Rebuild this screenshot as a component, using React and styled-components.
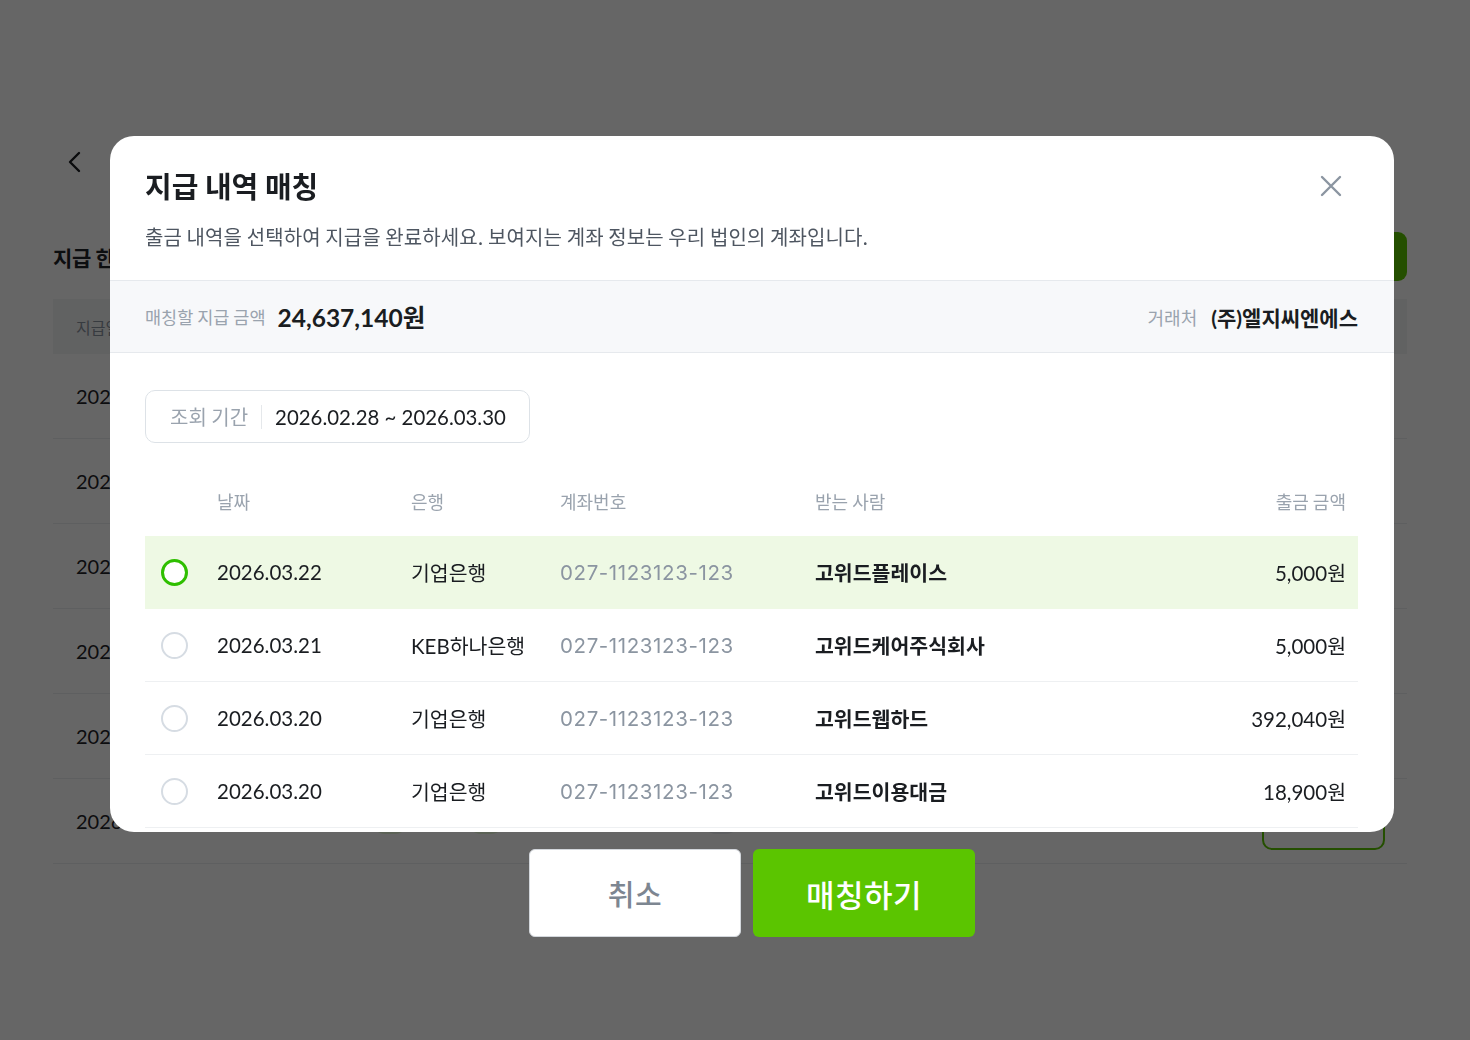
import styled, { createGlobalStyle } from "styled-components";

const GlobalStyle = createGlobalStyle`
  * { box-sizing: border-box; }
  html, body {
    margin: 0;
    padding: 0;
    background: #ffffff;
    font-family: "Lato", "Noto Sans CJK KR", sans-serif;
    color: #1f2329;
  }
`;

// 뒤에 깔린 페이지
const Page = styled.div`
  width: 1470px;
  height: 1040px;
  padding: 150px 63px 0 53px;
  overflow: hidden;
`;

const BackRow = styled.div`
  height: 24px;
  padding-left: 13px;
  display: flex;
  align-items: center;
  gap: 26px;
  font-size: 22px;
  font-weight: 700;
`;

const PageHead = styled.div`
  margin-top: 58px;
  display: flex;
  justify-content: space-between;
  align-items: center;
`;

const PageTitle = styled.h2`
  margin: 0;
  font-size: 21px;
  font-weight: 700;
  letter-spacing: -0.4px;
`;

const GreenBtn = styled.div`
  width: 120px;
  height: 49px;
  border-radius: 9px;
  background: #5bc500;
`;

const BgTable = styled.div`
  margin-top: 18px;
`;

const BgHeader = styled.div`
  height: 55px;
  background: #f3f4f6;
  display: flex;
  align-items: center;
  padding-left: 23px;
  font-size: 16px;
  color: #8b95a1;
`;

const BgRow = styled.div`
  height: 85px;
  border-bottom: 1px solid #eceef1;
  display: flex;
  align-items: center;
  padding: 0 22px 0 23px;
  font-size: 20px;
  gap: 60px;
`;

const BgPill = styled.span`
  width: 36px;
  height: 26px;
  border-radius: 13px;
  background: ${(p) => (p.gray ? "#e9ecef" : "#e4f5d6")};
`;

const BgOutline = styled.div`
  margin-left: auto;
  width: 123px;
  height: 58px;
  border: 2px solid #5bc500;
  border-radius: 10px;
`;

// 오버레이 + 모달
const Overlay = styled.div`
  position: fixed;
  inset: 0;
  background: rgba(0, 0, 0, 0.6);
  display: flex;
  flex-direction: column;
  align-items: center;
  padding: 136px 0 0 34px;
`;

const Modal = styled.div`
  width: 1284px;
  height: 696px;
  background: #ffffff;
  border-radius: 24px;
  overflow: hidden;
  display: flex;
  flex-direction: column;
`;

const Header = styled.div`
  position: relative;
  padding: 31px 36px 29px 35px;
`;

const Title = styled.h1`
  margin: 0;
  font-family: "Noto Sans CJK KR", sans-serif;
  font-size: 29px;
  line-height: 36px;
  font-weight: 700;
  color: #1a1d21;
`;

const Desc = styled.p`
  margin: 20px 0 0;
  font-family: "Noto Sans CJK KR", sans-serif;
  font-size: 20px;
  line-height: 28px;
  letter-spacing: 0.1px;
  color: #4e5661;
`;

const CloseBtn = styled.button`
  position: absolute;
  top: 36px;
  right: 49px;
  width: 28px;
  height: 28px;
  padding: 0;
  border: 0;
  background: transparent;
  cursor: pointer;
  display: flex;
  align-items: center;
  justify-content: center;
`;

const Summary = styled.div`
  height: 73px;
  flex-shrink: 0;
  background: #f7f8fa;
  border-top: 1px solid #e6e9ed;
  border-bottom: 1px solid #e6e9ed;
  display: flex;
  align-items: center;
  justify-content: space-between;
  padding: 0 36px 0 35px;
`;

const SummaryItem = styled.div`
  display: flex;
  align-items: center;
  gap: ${(p) => p.gap || 12}px;
`;

const SummaryLabel = styled.span`
  font-family: "Noto Sans CJK KR", sans-serif;
  font-size: ${(p) => p.size || 17.5}px;
  color: #9aa3ae;
`;

const SummaryValue = styled.span`
  font-size: ${(p) => p.size || 24.5}px;
  font-weight: 700;
  color: #1a1d21;
`;

const Body = styled.div`
  flex: 1;
  overflow: hidden;
  padding: 37px 36px 0 35px;
`;

const Period = styled.div`
  width: 385px;
  height: 53px;
  border: 1.5px solid #dde2e7;
  border-radius: 10px;
  display: flex;
  align-items: center;
  padding-left: 24px;
`;

const PeriodLabel = styled.span`
  font-family: "Noto Sans CJK KR", sans-serif;
  font-size: 20px;
  color: #9aa3ae;
`;

const PeriodSep = styled.span`
  width: 1px;
  height: 24px;
  background: #e5e8eb;
  margin: 0 13px 0 13px;
`;

const PeriodValue = styled.span`
  font-size: 20.4px;
  color: #1a1d21;
`;

const Table = styled.div`
  margin-top: 23px;
`;

const Row = styled.div`
  display: grid;
  grid-template-columns: 72px 194px 149px 255px 1fr auto;
  align-items: center;
  height: ${(p) => (p.head ? 70 : 73)}px;
  padding-right: 12px;
  background: ${(p) => (p.selected ? "#eef9e4" : "transparent")};
  border-bottom: 1px solid ${(p) => (p.head || p.selected ? "transparent" : "#eef0f2")};
`;

const HeadCell = styled.div`
  font-family: "Noto Sans CJK KR", sans-serif;
  font-size: 18px;
  color: #9aa3ae;
  text-align: ${(p) => (p.right ? "right" : "left")};
`;

const Cell = styled.div`
  font-size: 20.5px;
  font-weight: ${(p) => (p.bold ? 700 : 400)};
  color: ${(p) => (p.muted ? "#8b95a1" : "#1a1d21")};
  font-family: ${(p) => (p.mono ? '"Inter", "Noto Sans CJK KR", sans-serif' : "inherit")};
  letter-spacing: ${(p) => (p.mono ? "0.6px" : "0")};
  text-align: ${(p) => (p.right ? "right" : "left")};
  white-space: nowrap;
`;

const Radio = styled.span`
  display: block;
  margin-left: 16px;
  width: 27px;
  height: 27px;
  border-radius: 50%;
  border: ${(p) => (p.checked ? "3px solid #2fbf00" : "2px solid #d6dce3")};
  background: #ffffff;
`;

const Footer = styled.div`
  margin-top: 17px;
  display: flex;
  gap: 12px;
`;

const Button = styled.button`
  width: ${(p) => (p.primary ? 222 : 212)}px;
  height: 88px;
  border-radius: 6px;
  border: ${(p) => (p.primary ? "0" : "1px solid #d3d7dc")};
  background: ${(p) => (p.primary ? "#5bc500" : "#ffffff")};
  color: ${(p) => (p.primary ? "#ffffff" : "#7d8691")};
  font-family: "Noto Sans CJK KR", sans-serif;
  font-size: ${(p) => (p.primary ? 31 : 29)}px;
  font-weight: 500;
  letter-spacing: 0.5px;
  cursor: pointer;
`;

const rows = [
  { date: "2026.03.22", bank: "기업은행", account: "027-1123123-123", name: "고위드플레이스", amount: "5,000원", selected: true },
  { date: "2026.03.21", bank: "KEB하나은행", account: "027-1123123-123", name: "고위드케어주식회사", amount: "5,000원" },
  { date: "2026.03.20", bank: "기업은행", account: "027-1123123-123", name: "고위드웹하드", amount: "392,040원" },
  { date: "2026.03.20", bank: "기업은행", account: "027-1123123-123", name: "고위드이용대금", amount: "18,900원" },
];

const bgDates = ["2026.03.30", "2026.03.28", "2026.03.25", "2026.03.22", "2026.03.20", "2026.03.18"];

function CloseIcon() {
  return (
    <svg width="24" height="24" viewBox="0 0 24 24">
      <path d="M3 3L21 21M21 3L3 21" stroke="#8b95a1" strokeWidth="2.4" strokeLinecap="round" />
    </svg>
  );
}

function BackIcon() {
  return (
    <svg width="18" height="24" viewBox="0 0 18 24">
      <path d="M13 3L4 12L13 21" stroke="#1a1d21" strokeWidth="2.4" fill="none" strokeLinecap="round" strokeLinejoin="round" />
    </svg>
  );
}

function App() {
  return (
    <>
      <GlobalStyle />
      <Page>
        <BackRow>
          <BackIcon />
          <span>지급 상세</span>
        </BackRow>
        <PageHead>
          <PageTitle>지급 한도 내역</PageTitle>
          <GreenBtn />
        </PageHead>
        <BgTable>
          <BgHeader>지급일</BgHeader>
          {bgDates.map((d, i) => (
            <BgRow key={i}>
              <span>{d}</span>
              <span>가나다라</span>
              <BgPill />
              <BgPill />
              <span>지급 대기</span>
              <BgPill gray />
              {i === 5 && <BgOutline />}
            </BgRow>
          ))}
        </BgTable>
      </Page>

      <Overlay>
        <Modal>
          <Header>
            <Title>지급 내역 매칭</Title>
            <Desc>출금 내역을 선택하여 지급을 완료하세요. 보여지는 계좌 정보는 우리 법인의 계좌입니다.</Desc>
            <CloseBtn aria-label="닫기">
              <CloseIcon />
            </CloseBtn>
          </Header>

          <Summary>
            <SummaryItem>
              <SummaryLabel>매칭할 지급 금액</SummaryLabel>
              <SummaryValue>24,637,140원</SummaryValue>
            </SummaryItem>
            <SummaryItem gap={14}>
              <SummaryLabel size={18}>거래처</SummaryLabel>
              <SummaryValue size={21}>(주)엘지씨엔에스</SummaryValue>
            </SummaryItem>
          </Summary>

          <Body>
            <Period>
              <PeriodLabel>조회 기간</PeriodLabel>
              <PeriodSep />
              <PeriodValue>2026.02.28 ~ 2026.03.30</PeriodValue>
            </Period>

            <Table>
              <Row head>
                <span />
                <HeadCell>날짜</HeadCell>
                <HeadCell>은행</HeadCell>
                <HeadCell>계좌번호</HeadCell>
                <HeadCell>받는 사람</HeadCell>
                <HeadCell right>출금 금액</HeadCell>
              </Row>
              {rows.map((r, i) => (
                <Row key={i} selected={r.selected}>
                  <Radio checked={r.selected} />
                  <Cell>{r.date}</Cell>
                  <Cell>{r.bank}</Cell>
                  <Cell mono muted>
                    {r.account}
                  </Cell>
                  <Cell bold>{r.name}</Cell>
                  <Cell right>{r.amount}</Cell>
                </Row>
              ))}
            </Table>
          </Body>
        </Modal>

        <Footer>
          <Button>취소</Button>
          <Button primary>매칭하기</Button>
        </Footer>
      </Overlay>
    </>
  );
}

export default App;
